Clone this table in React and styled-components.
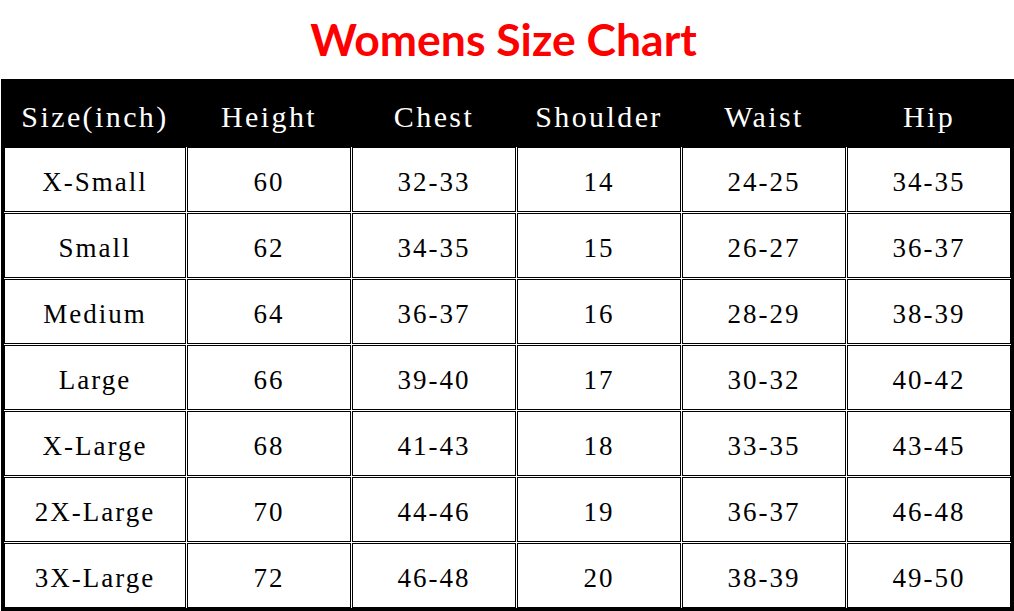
import React from "react";
import styled, { createGlobalStyle } from "styled-components";

const GlobalStyle = createGlobalStyle`
  html, body {
    margin: 0;
    padding: 0;
    background: #ffffff;
  }
  body {
    font-family: "Liberation Serif", "Times New Roman", serif;
  }
`;

const Page = styled.div`
  width: 1014px;
  display: flex;
  flex-direction: column;
`;

const Title = styled.h1`
  margin: 0;
  height: 79px;
  display: flex;
  align-items: center;
  justify-content: center;
  padding-right: 7px;
  padding-bottom: 1px;
  box-sizing: border-box;
  font-family: "Lato", "Open Sans", sans-serif;
  font-weight: 700;
  font-size: 44.5px;
  letter-spacing: 0;
  color: #ff0000;
  line-height: 1;
`;

const Chart = styled.div`
  margin-left: 1px;
  width: 1013px;
  box-sizing: border-box;
  border: 3px solid #000;
  background: #fff;
  display: flex;
  flex-direction: column;
`;

const columns = `182px repeat(5, 164px)`;

const HeaderRow = styled.div`
  display: grid;
  grid-template-columns: ${columns};
  column-gap: 1px;
  height: 65px;
  background: #000;
`;

const HeaderCell = styled.div`
  display: flex;
  align-items: center;
  justify-content: center;
  padding-top: 4px;
  box-sizing: border-box;
  color: #fff;
  font-size: 30px;
  letter-spacing: 2.4px;
  white-space: nowrap;
`;

const Body = styled.div`
  display: grid;
  grid-template-columns: ${columns};
  grid-auto-rows: 65px;
  gap: 1px;
`;

const Cell = styled.div`
  box-sizing: border-box;
  border: 1px solid #000;
  display: flex;
  align-items: center;
  justify-content: center;
  padding-top: 5px;
  color: #000;
  font-size: 27px;
  letter-spacing: 2px;
  white-space: nowrap;
`;

const headers = ["Size(inch)", "Height", "Chest", "Shoulder", "Waist", "Hip"];

const rows = [
  ["X-Small", "60", "32-33", "14", "24-25", "34-35"],
  ["Small", "62", "34-35", "15", "26-27", "36-37"],
  ["Medium", "64", "36-37", "16", "28-29", "38-39"],
  ["Large", "66", "39-40", "17", "30-32", "40-42"],
  ["X-Large", "68", "41-43", "18", "33-35", "43-45"],
  ["2X-Large", "70", "44-46", "19", "36-37", "46-48"],
  ["3X-Large", "72", "46-48", "20", "38-39", "49-50"],
];

export default function App() {
  return (
    <Page>
      <GlobalStyle />
      <Title>Womens Size Chart</Title>
      <Chart>
        <HeaderRow>
          {headers.map((h) => (
            <HeaderCell key={h}>{h}</HeaderCell>
          ))}
        </HeaderRow>
        <Body>
          {rows.map((r) =>
            r.map((v, i) => <Cell key={r[0] + i}>{v}</Cell>)
          )}
        </Body>
      </Chart>
    </Page>
  );
}
